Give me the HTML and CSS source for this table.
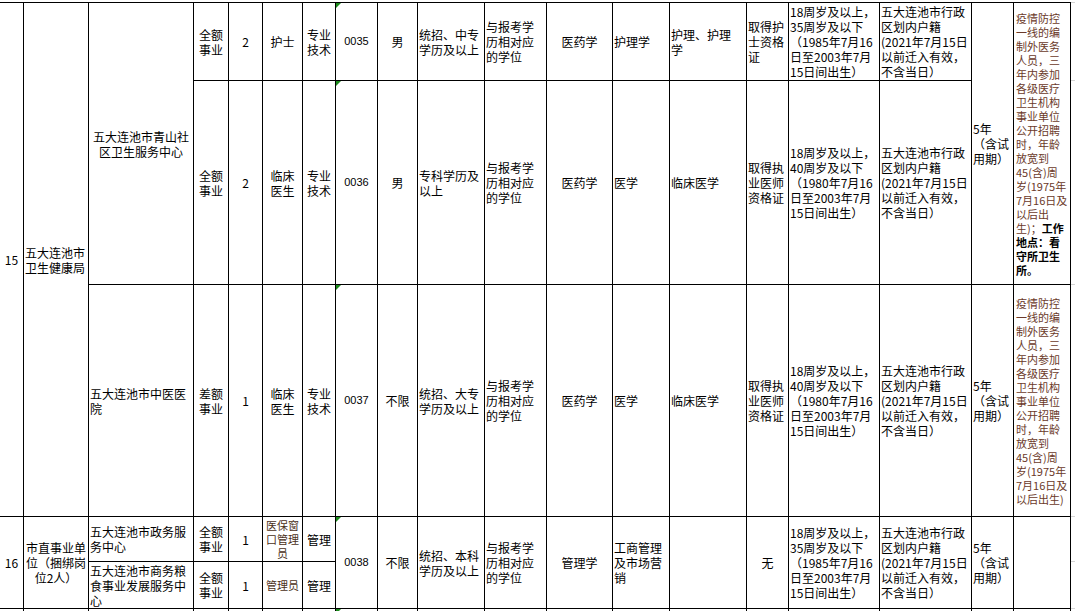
FILE: index.html
```html
<!DOCTYPE html>
<html lang="zh-CN">
<head>
<meta charset="utf-8">
<title>岗位表</title>
<link rel="stylesheet" href="styles.css">
</head>
<body>
<div class="sheet">
  <div class="grid">
    <!-- row 0035 -->
    <div class="c ctr rs3">15</div>
    <div class="c rs3">五大连池市<br>卫生健康局</div>
    <div class="c ctr rs2">五大连池市青山社<br>区卫生服务中心</div>
    <div class="c ctr">全额<br>事业</div>
    <div class="c ctr">2</div>
    <div class="c ctr">护士</div>
    <div class="c ctr">专业<br>技术</div>
    <div class="c ctr num tri">0035</div>
    <div class="c ctr">男</div>
    <div class="c">统招、中专<br>学历及以上</div>
    <div class="c">与报考学<br>历相对应<br>的学位</div>
    <div class="c ctr">医药学</div>
    <div class="c">护理学</div>
    <div class="c">护理、护理<br>学</div>
    <div class="c">取得护<br>士资格<br>证</div>
    <div class="c">18周岁及以上，<br>35周岁及以下<br>（1985年7月16<br>日至2003年7月<br>15日间出生）</div>
    <div class="c">五大连池市行政<br>区划内户籍<br>(2021年7月15日<br>以前迁入有效，<br>不含当日）</div>
    <div class="c rs2">5年<br>（含试<br>用期）</div>
    <div class="c note rs2"><div class="t">疫情防控<br>一线的编<br>制外医务<br>人员，三<br>年内参加<br>各级医疗<br>卫生机构<br>事业单位<br>公开招聘<br>时，年龄<br>放宽到<br>45(含)周<br>岁(1975年<br>7月16日及<br>以后出<br>生)；<b>工作</b><br><b>地点：看</b><br><b>守所卫生</b><br><b>所。</b></div></div>

    <!-- row 0036 -->
    <div class="c ctr">全额<br>事业</div>
    <div class="c ctr">2</div>
    <div class="c ctr">临床<br>医生</div>
    <div class="c ctr">专业<br>技术</div>
    <div class="c ctr num tri">0036</div>
    <div class="c ctr">男</div>
    <div class="c">专科学历及<br>以上</div>
    <div class="c">与报考学<br>历相对应<br>的学位</div>
    <div class="c ctr">医药学</div>
    <div class="c">医学</div>
    <div class="c">临床医学</div>
    <div class="c">取得执<br>业医师<br>资格证</div>
    <div class="c">18周岁及以上，<br>40周岁及以下<br>（1980年7月16<br>日至2003年7月<br>15日间出生）</div>
    <div class="c">五大连池市行政<br>区划内户籍<br>(2021年7月15日<br>以前迁入有效，<br>不含当日）</div>

    <!-- row 0037 -->
    <div class="c">五大连池市中医医<br>院</div>
    <div class="c ctr">差额<br>事业</div>
    <div class="c ctr">1</div>
    <div class="c ctr">临床<br>医生</div>
    <div class="c ctr">专业<br>技术</div>
    <div class="c ctr num tri">0037</div>
    <div class="c ctr">不限</div>
    <div class="c">统招、大专<br>学历及以上</div>
    <div class="c">与报考学<br>历相对应<br>的学位</div>
    <div class="c ctr">医药学</div>
    <div class="c">医学</div>
    <div class="c">临床医学</div>
    <div class="c">取得执<br>业医师<br>资格证</div>
    <div class="c">18周岁及以上，<br>40周岁及以下<br>（1980年7月16<br>日至2003年7月<br>15日间出生）</div>
    <div class="c">五大连池市行政<br>区划内户籍<br>(2021年7月15日<br>以前迁入有效，<br>不含当日）</div>
    <div class="c">5年<br>（含试<br>用期）</div>
    <div class="c note"><div class="t">疫情防控<br>一线的编<br>制外医务<br>人员，三<br>年内参加<br>各级医疗<br>卫生机构<br>事业单位<br>公开招聘<br>时，年龄<br>放宽到<br>45(含)周<br>岁(1975年<br>7月16日及<br>以后出生)</div></div>

    <!-- row 16 a -->
    <div class="c ctr rs2">16</div>
    <div class="c ctr rs2">市直事业单<br>位（捆绑岗<br>位2人）</div>
    <div class="c">五大连池市政务服<br>务中心</div>
    <div class="c ctr">全额<br>事业</div>
    <div class="c ctr">1</div>
    <div class="c ctr mini">医保窗<br>口管理<br>员</div>
    <div class="c ctr">管理</div>
    <div class="c ctr num tri rs2">0038</div>
    <div class="c ctr rs2">不限</div>
    <div class="c rs2">统招、本科<br>学历及以上</div>
    <div class="c rs2">与报考学<br>历相对应<br>的学位</div>
    <div class="c ctr rs2">管理学</div>
    <div class="c rs2">工商管理<br>及市场营<br>销</div>
    <div class="c rs2"></div>
    <div class="c ctr rs2">无</div>
    <div class="c rs2">18周岁及以上，<br>35周岁及以下<br>（1985年7月16<br>日至2003年7月<br>15日间出生）</div>
    <div class="c rs2">五大连池市行政<br>区划内户籍<br>(2021年7月15日<br>以前迁入有效，<br>不含当日）</div>
    <div class="c rs2">5年<br>（含试<br>用期）</div>
    <div class="c rs2"></div>

    <!-- row 16 b -->
    <div class="c">五大连池市商务粮<br>食事业发展服务中<br>心</div>
    <div class="c ctr">全额<br>事业</div>
    <div class="c ctr">1</div>
    <div class="c ctr mini">管理员</div>
    <div class="c ctr">管理</div>

    <!-- partial next row -->
    <div class="c"></div><div class="c"></div><div class="c"></div><div class="c"></div>
    <div class="c"></div><div class="c"></div><div class="c"></div><div class="c tri"></div>
    <div class="c"></div><div class="c"></div><div class="c"></div><div class="c"></div>
    <div class="c"></div><div class="c"></div><div class="c"></div><div class="c"></div>
    <div class="c"></div><div class="c"></div><div class="c"></div>
  </div>
  <div class="side">
    <div class="sc"></div><div class="sc"></div><div class="sc"></div>
    <div class="sc"></div><div class="sc"></div><div class="sc"></div>
  </div>
</div>
</body>
</html>
```

FILE: styles.css
```css
html, body {
  margin: 0;
  padding: 0;
  background: #fff;
  overflow: hidden;
  height: 611px;
}
body {
  font-family: "Noto Sans CJK SC", "Noto Sans", sans-serif;
  font-size: 12px;
  line-height: 15px;
  color: #000;
}
.sheet {
  display: flex;
  margin-top: 2px;
  width: 1075px;
}
.grid {
  display: grid;
  grid-template-columns: 23px 64px 104px 34px 33px 39px 32px 41px 39px 66px 61px 65px 56px 76px 41px 90px 91px 41px 56px;
  grid-template-rows: 77px 203px 231px 44px 46px 20px;
  gap: 1px;
  background: #000;
  border-top: 1px solid #000;
  border-right: 1px solid #000;
  flex: none;
}
.c {
  background: #fff;
  display: flex;
  align-items: center;
  padding: 0 1px;
  white-space: nowrap;
  position: relative;
  overflow: visible;
}
.ctr {
  justify-content: center;
  text-align: center;
  padding: 0;
}
.rs2 { grid-row: span 2; }
.rs3 { grid-row: span 3; }
.num {
  font-family: "Liberation Sans", Arial, sans-serif;
  font-size: 11px;
}
.tri::before {
  content: "";
  position: absolute;
  top: 0;
  left: 0;
  border-top: 5px solid #1a8a1a;
  border-right: 5px solid transparent;
}
.note {
  font-size: 11px;
  line-height: 14px;
  color: #6b3a2a;
  padding-left: 2px;
}
.note b {
  color: #000;
  font-weight: 700;
}
.mini {
  font-size: 11px;
  line-height: 14px;
  color: #4a3020;
}
.side {
  flex: 1;
  display: grid;
  grid-template-rows: 77px 203px 231px 44px 46px 20px;
  row-gap: 1px;
  background: #d4d4d4;
  border-top: 1px solid #d4d4d4;
}
.sc {
  background: #fff;
}
```
